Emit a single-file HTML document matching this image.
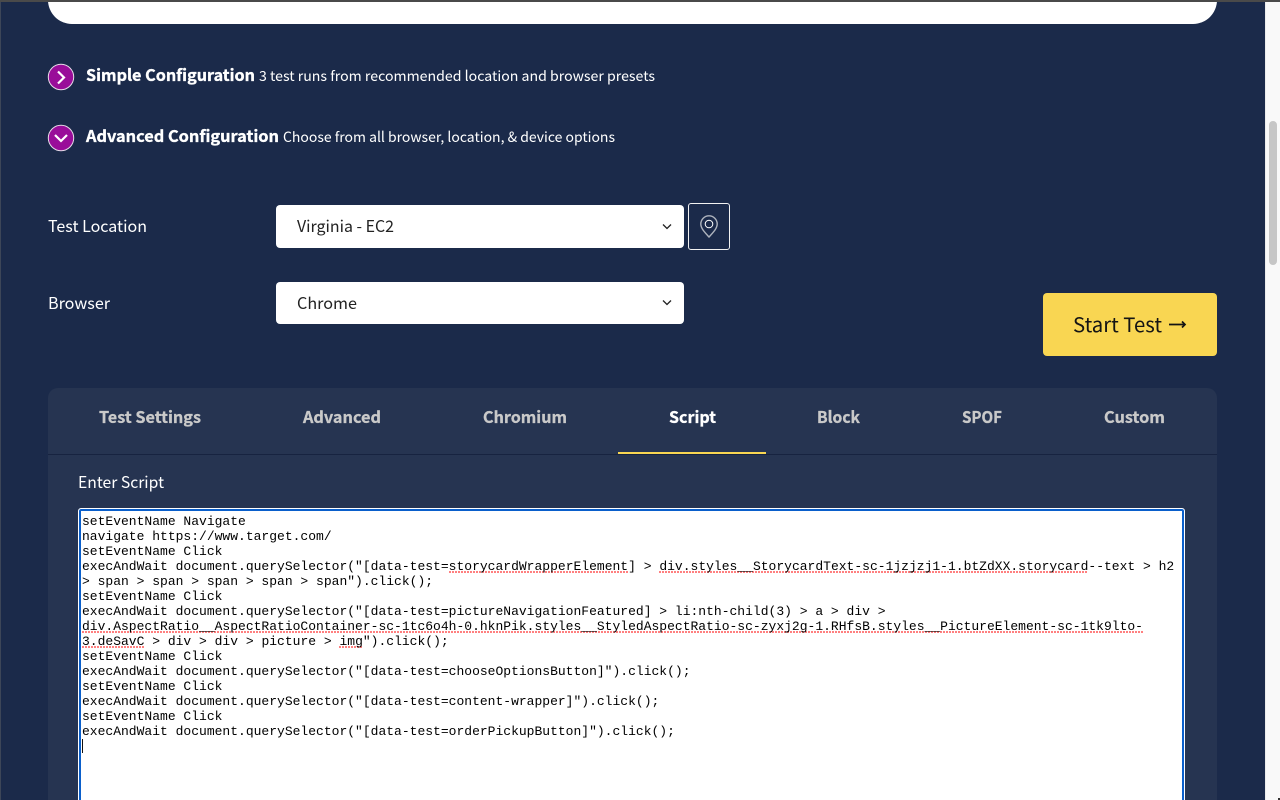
<!DOCTYPE html>
<html lang="en">
<head>
<meta charset="utf-8">
<title>Script test configuration</title>
<style>
html,body{margin:0;padding:0;width:1280px;height:800px;overflow:hidden;background:#1b2a4a}
.a{position:absolute;box-sizing:border-box}
#page{position:relative;width:1280px;height:800px;overflow:hidden;background:#1b2a4a}
svg text{font-family:"Noto Sans CJK JP","Liberation Sans",sans-serif;fill:#fff}
#code{left:82px;top:514px;margin:0;font:13px/15px "Liberation Mono",monospace;color:#000;white-space:pre}
#code u{text-decoration:none;background-image:linear-gradient(90deg,#ff8080 2px,transparent 2px);background-size:3px 2px;background-position:0 12px;background-repeat:repeat-x}
</style>
</head>
<body>
<div id="page">
  <div class="a" style="left:0;top:0;width:1px;height:800px;background:#3d4658"></div>
  <div class="a" style="left:48px;top:-40px;width:1169px;height:64px;background:#fff;border-radius:24px"></div>
  <div class="a" style="left:1265px;top:0;width:15px;height:800px;background:#f9f9f9;border-left:1px solid #ececec"></div>
  <div class="a" style="left:1269px;top:121px;width:8px;height:144px;background:#c6c6c6;border-radius:4px"></div>
  <div class="a" style="left:0;top:0;width:1280px;height:2px;background:#4a4a4a"></div>
  <div class="a" style="left:1278px;top:798px;width:2px;height:2px;background:#333"></div>

  <div class="a" style="left:276px;top:205px;width:408px;height:43px;background:#fff;border-radius:4px"></div>
  <div class="a" style="left:276px;top:282px;width:408px;height:42px;background:#fff;border-radius:4px"></div>
  <div class="a" style="left:688px;top:203px;width:42px;height:47px;border:1px solid #f2f2f2;border-radius:3px"></div>
  <div class="a" style="left:1043px;top:293px;width:174px;height:63px;background:#f9d652;border-radius:4px"></div>

  <div class="a" style="left:48px;top:388px;width:1169px;height:430px;background:#263451;border-radius:10px"></div>
  <div class="a" style="left:48px;top:454px;width:1169px;height:1px;background:#172340"></div>
  <div class="a" style="left:618px;top:452px;width:148px;height:2px;background:#f9d652"></div>

  <div class="a" style="left:78px;top:508px;width:1107px;height:310px;background:#fff;border:1px solid #fff;box-shadow:inset 0 0 0 2px #0a5fcb;border-radius:3px"></div>
  <pre class="a" id="code">setEventName Navigate
navigate https://www.target.com/
setEventName Click
execAndWait document.querySelector("[data-test=<u>storycardWrapperElement</u>] &gt; <u>div.styles__StorycardText-sc-1jzjzj1-1.btZdXX.storycard</u>--text &gt; h2
&gt; span &gt; span &gt; span &gt; span &gt; span").click();
setEventName Click
execAndWait document.querySelector("[data-test=pictureNavigationFeatured] &gt; li:nth-child(3) &gt; a &gt; div &gt;
<u>div.AspectRatio__AspectRatioContainer-sc-1tc6o4h-0.hknPik.styles__StyledAspectRatio-sc-zyxj2g-1.RHfsB.styles__PictureElement-sc-1tk9lto-</u>
<u>3.deSavC</u> &gt; div &gt; div &gt; picture &gt; <u>img</u>").click();
setEventName Click
execAndWait document.querySelector("[data-test=chooseOptionsButton]").click();
setEventName Click
execAndWait document.querySelector("[data-test=content-wrapper]").click();
setEventName Click
execAndWait document.querySelector("[data-test=orderPickupButton]").click();
</pre>
  <div class="a" style="left:82px;top:739px;width:1px;height:14px;background:#111"></div>

  <svg class="a" style="left:0;top:0" width="1280" height="800" viewBox="0 0 1280 800">
    <circle cx="61" cy="77" r="12.7" fill="#990d99" stroke="#e6dbe8" stroke-width="1"/>
    <path d="M58 71.5 L64 77.5 L58 83.5" fill="none" stroke="#fff" stroke-width="2.2"/>
    <circle cx="61" cy="138" r="12.7" fill="#990d99" stroke="#e6dbe8" stroke-width="1"/>
    <path d="M55 135 L61 141 L67 135" fill="none" stroke="#fff" stroke-width="2.2"/>

    <path d="M663 224.5 L667 228.5 L671 224.5" fill="none" stroke="#222" stroke-width="1.3"/>
    <path d="M663 300.5 L667 304.5 L671 300.5" fill="none" stroke="#222" stroke-width="1.3"/>

    <path d="M709 237 C705 232.5 700.8 228.5 700.8 224 A8.2 8.2 0 0 1 717.2 224 C717.2 228.5 713 232.5 709 237 Z" fill="none" stroke="#aeb3bd" stroke-width="1.4"/>
    <circle cx="709" cy="224" r="3.8" fill="none" stroke="#fff" stroke-width="1"/>

    <text x="86" y="81" font-size="16" font-weight="700" stroke="#fff" stroke-width="0.35" textLength="169" lengthAdjust="spacingAndGlyphs">Simple Configuration</text>
    <text x="259" y="81" font-size="14" textLength="396" lengthAdjust="spacingAndGlyphs">3 test runs from recommended location and browser presets</text>
    <text x="86" y="142" font-size="16" font-weight="700" stroke="#fff" stroke-width="0.35" textLength="193" lengthAdjust="spacingAndGlyphs">Advanced Configuration</text>
    <text x="283" y="142" font-size="14" textLength="332" lengthAdjust="spacingAndGlyphs">Choose from all browser, location, &amp; device options</text>

    <text x="48" y="232" font-size="16" textLength="99" lengthAdjust="spacingAndGlyphs">Test Location</text>
    <text x="297" y="232" font-size="16" style="fill:#222" textLength="97" lengthAdjust="spacingAndGlyphs">Virginia - EC2</text>
    <text x="48" y="309" font-size="16" textLength="62" lengthAdjust="spacingAndGlyphs">Browser</text>
    <text x="297" y="309" font-size="16" style="fill:#222" textLength="60" lengthAdjust="spacingAndGlyphs">Chrome</text>
    <text x="1073" y="332" font-size="20" style="fill:#141414" textLength="89" lengthAdjust="spacingAndGlyphs">Start Test</text>
    <path d="M1169 324.5 H1185 M1182 321.5 L1185 324.5 L1182 327.5" fill="none" stroke="#141414" stroke-width="1.7"/>

    <g font-size="16" font-weight="700" stroke-width="0.3">
      <text x="99" y="423" style="fill:#c9c9c9" stroke="#c9c9c9" textLength="102" lengthAdjust="spacingAndGlyphs">Test Settings</text>
      <text x="303" y="423" style="fill:#c9c9c9" stroke="#c9c9c9" textLength="78" lengthAdjust="spacingAndGlyphs">Advanced</text>
      <text x="483" y="423" style="fill:#c9c9c9" stroke="#c9c9c9" textLength="84" lengthAdjust="spacingAndGlyphs">Chromium</text>
      <text x="669" y="423" stroke="#fff" textLength="47" lengthAdjust="spacingAndGlyphs">Script</text>
      <text x="817" y="423" style="fill:#c9c9c9" stroke="#c9c9c9" textLength="43" lengthAdjust="spacingAndGlyphs">Block</text>
      <text x="962" y="423" style="fill:#c9c9c9" stroke="#c9c9c9" textLength="40" lengthAdjust="spacingAndGlyphs">SPOF</text>
      <text x="1104" y="423" style="fill:#c9c9c9" stroke="#c9c9c9" textLength="61" lengthAdjust="spacingAndGlyphs">Custom</text>
    </g>
    <text x="78" y="488" font-size="16" textLength="86" lengthAdjust="spacingAndGlyphs">Enter Script</text>
  </svg>
</div>
</body>
</html>
